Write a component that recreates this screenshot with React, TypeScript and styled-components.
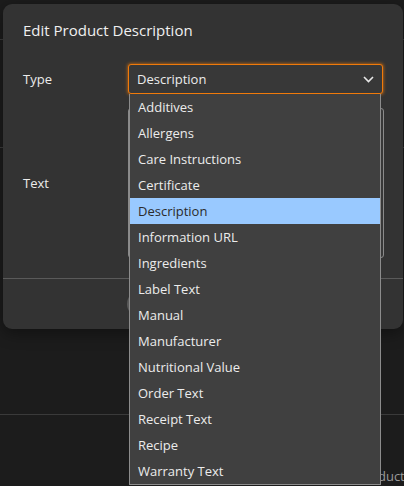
import React from "react";
import styled, { createGlobalStyle } from "styled-components";

const GlobalStyle = createGlobalStyle`
  html, body {
    margin: 0;
    padding: 0;
    background: #1c1c1c;
    font-family: "Open Sans", "Noto Sans", "Liberation Sans", sans-serif;
    color: #e6e6e6;
  }
  * { box-sizing: border-box; }
`;

const Page = styled.div`
  position: relative;
  width: 404px;
  height: 486px;
  overflow: hidden;
  background: #1c1c1c;
`;

// the page that sits behind the modal
const Backdrop = styled.div`
  display: flex;
  flex-direction: column;
  height: 100%;
`;

const BackBar = styled.div<{ $h: number }>`
  height: ${(p) => p.$h}px;
  border-bottom: 1px solid #3c3c3c;
`;

const BackGap = styled.div`
  height: 266px;
`;

const BackFill = styled.div`
  flex: 1;
  border-top: 1px solid #3a3a3a;
  padding: 52px 0 0 357px;
  font-size: 13px;
  color: #9a9a9a;
  white-space: nowrap;
  overflow: hidden;
`;

const Dialog = styled.div`
  position: absolute;
  left: 3px;
  top: 4px;
  width: 400px;
  height: 325px;
  background: #333333;
  border-radius: 9px;
  display: flex;
  flex-direction: column;
  box-shadow: 0 4px 16px rgba(0, 0, 0, 0.4);
`;

const Title = styled.h2`
  margin: 0;
  padding: 16px 20px 0;
  height: 48px;
  font-size: 15px;
  font-weight: 400;
  color: #f0f0f0;
`;

const Form = styled.div`
  display: flex;
  flex-direction: column;
  gap: 14px;
  padding: 12px 20px 20px;
  border-bottom: 1px solid #5a5a5a;
`;

const Row = styled.div`
  display: grid;
  grid-template-columns: 105px 1fr;
  align-items: center;
`;

const Label = styled.span`
  font-size: 13px;
  color: #ececec;
`;

const SelectWrap = styled.div`
  position: relative;
`;

const SelectBox = styled.div`
  height: 30px;
  display: flex;
  align-items: center;
  justify-content: space-between;
  padding: 0 8px 0 8px;
  background: #383838;
  border: 1px solid #f07a0a;
  border-radius: 3px;
  box-shadow: 0 0 3px 1px rgba(240, 122, 10, 0.55);
  font-size: 13px;
  color: #ececec;
`;

const TextArea = styled.div`
  height: 150px;
  margin-right: -1px;
  background: #383838;
  border: 1px solid #8a8a8a;
  border-radius: 3px;
`;

const Footer = styled.div`
  flex: 1;
  display: flex;
  align-items: center;
  justify-content: center;
  gap: 8px;
`;

const Button = styled.button`
  width: 72px;
  height: 26px;
  border: none;
  border-radius: 13px;
  background: #5a5a5a;
`;

const List = styled.ul`
  position: absolute;
  top: 100%;
  left: 1px;
  width: 252px;
  margin: 0;
  padding: 0;
  list-style: none;
  background: #404040;
  border: 1px solid #8c8c8c;
  border-top: none;
  z-index: 5;
`;

const Option = styled.li<{ $active?: boolean }>`
  height: 26px;
  display: flex;
  align-items: center;
  padding-left: 8px;
  font-size: 13px;
  background: ${(p) => (p.$active ? "#99c9ff" : "transparent")};
  color: ${(p) => (p.$active ? "#2b2b2b" : "#ececec")};
`;

const options = [
  "Additives",
  "Allergens",
  "Care Instructions",
  "Certificate",
  "Description",
  "Information URL",
  "Ingredients",
  "Label Text",
  "Manual",
  "Manufacturer",
  "Nutritional Value",
  "Order Text",
  "Receipt Text",
  "Recipe",
  "Warranty Text",
];

const Chevron = () => (
  <svg width="11" height="7" viewBox="0 0 11 7" fill="none">
    <path d="M1 1l4.5 4.5L10 1" stroke="#e8e8e8" strokeWidth="1.6" />
  </svg>
);

const App = () => {
  const selected = "Description";
  return (
    <Page>
      <GlobalStyle />
      <Backdrop>
        <BackBar $h={40} />
        <BackBar $h={108} />
        <BackGap />
        <BackFill>Product Description</BackFill>
      </Backdrop>
      <Dialog>
        <Title>Edit Product Description</Title>
        <Form>
          <Row>
            <Label>Type</Label>
            <SelectWrap>
              <SelectBox>
                {selected}
                <Chevron />
              </SelectBox>
              <List>
                {options.map((o) => (
                  <Option key={o} $active={o === selected}>
                    {o}
                  </Option>
                ))}
              </List>
            </SelectWrap>
          </Row>
          <Row>
            <Label>Text</Label>
            <TextArea />
          </Row>
        </Form>
        <Footer>
          <Button aria-label="Cancel" />
          <Button aria-label="Save" />
        </Footer>
      </Dialog>
    </Page>
  );
};

export default App;
